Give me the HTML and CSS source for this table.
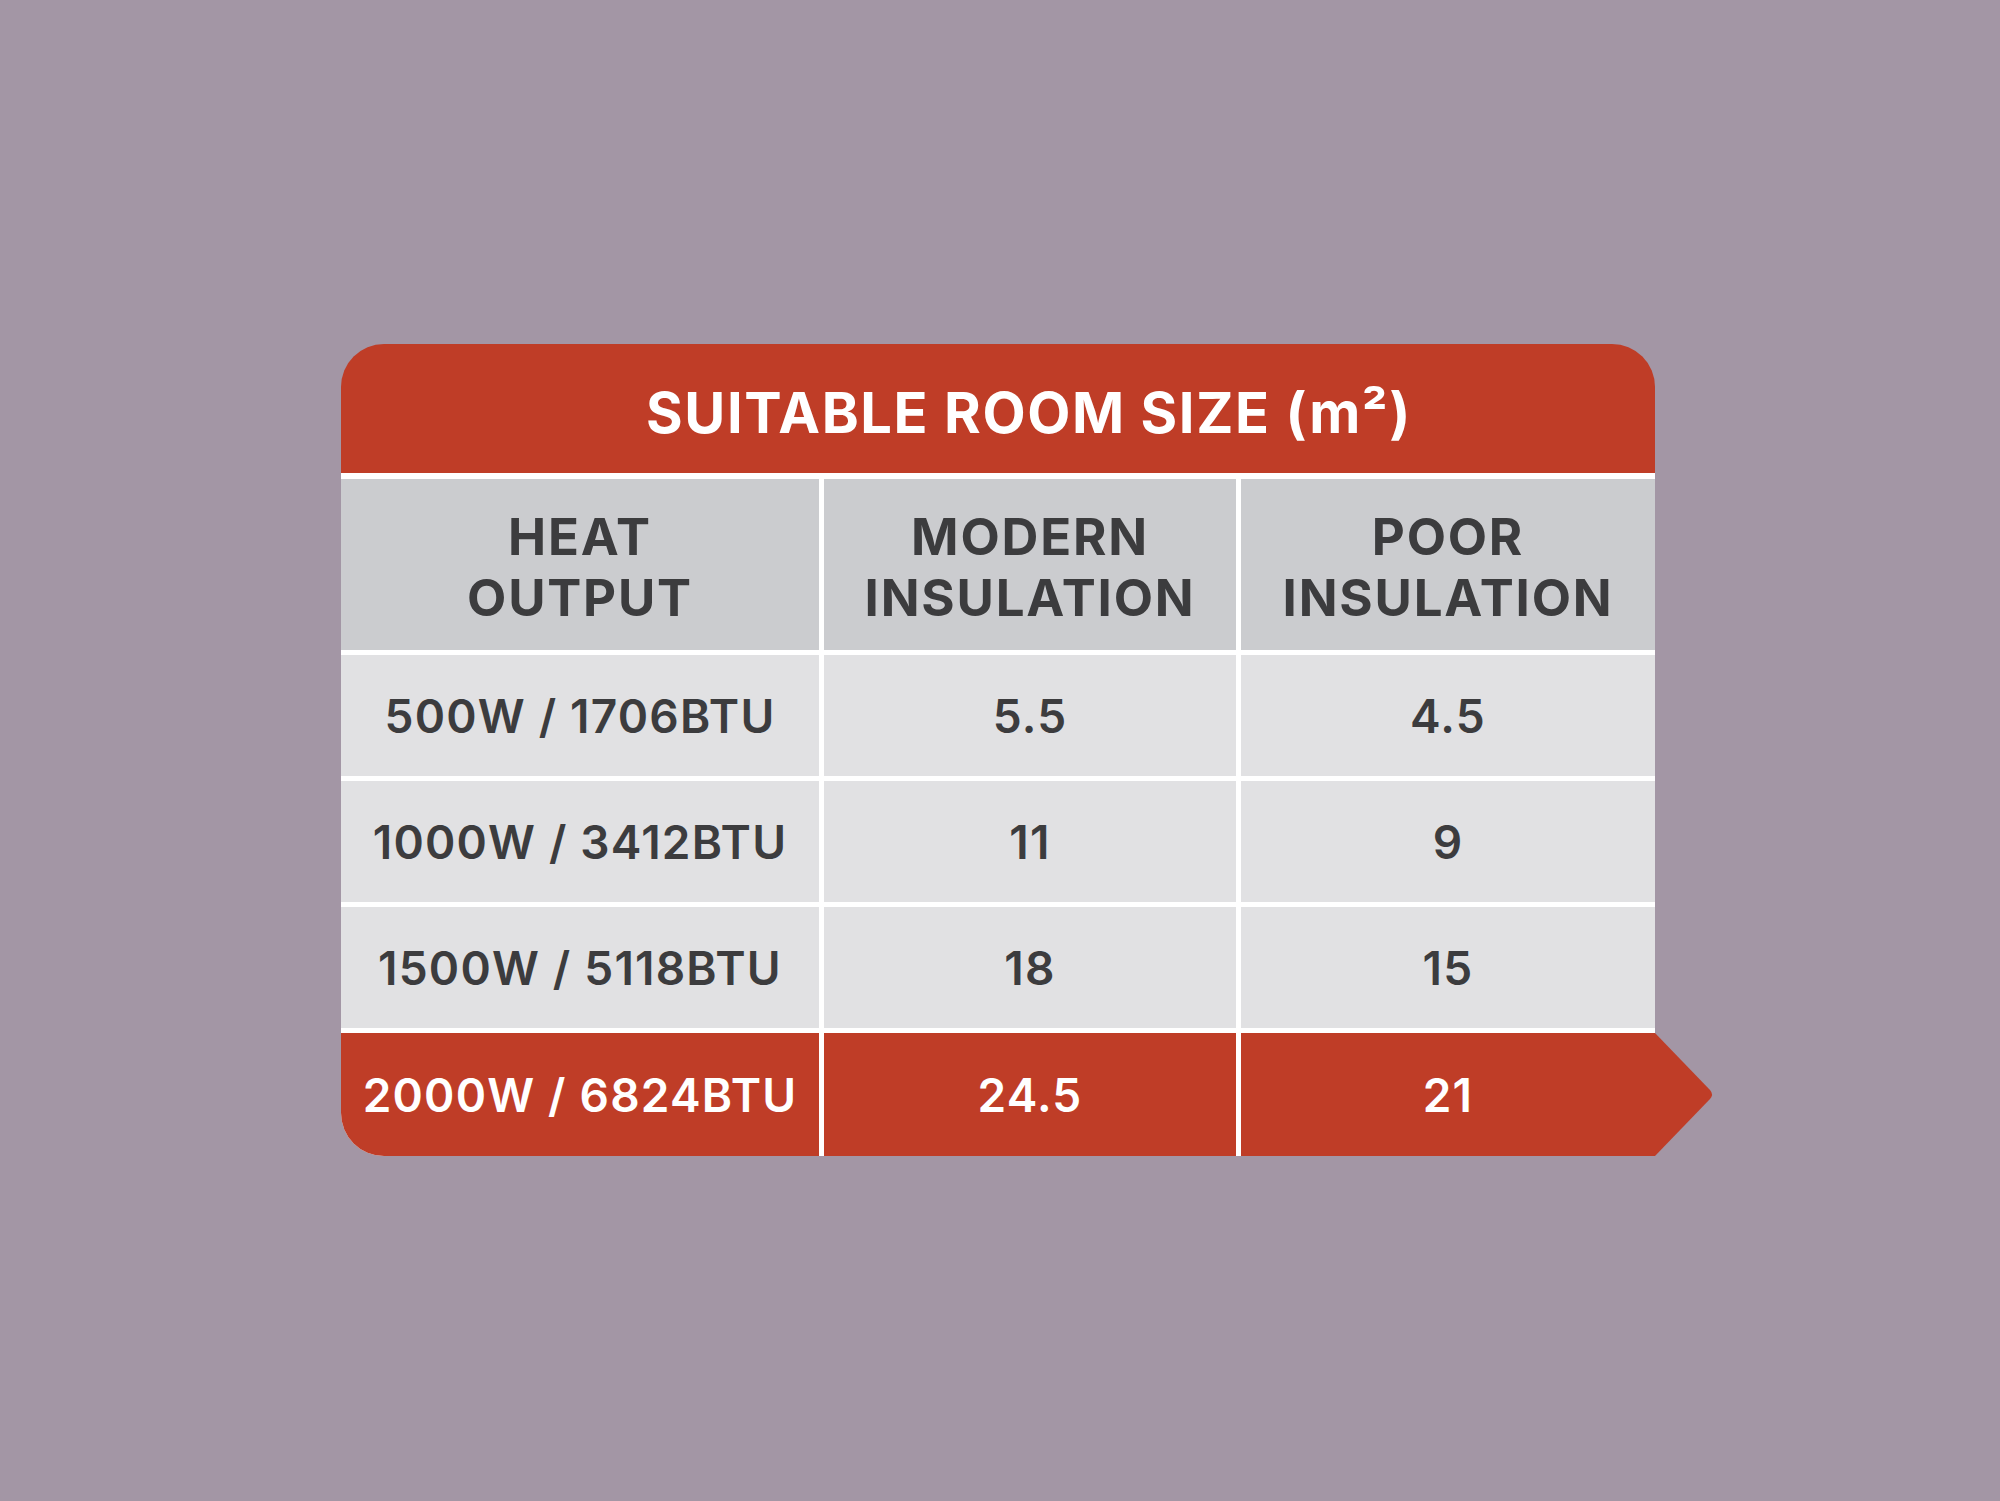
FILE: index.html
```html
<!DOCTYPE html>
<html lang="en">
<head>
<meta charset="utf-8">
<title>Suitable Room Size</title>
<link rel="stylesheet" href="styles.css">
</head>
<body>
<div class="chart">
  <div class="title">SUITABLE ROOM SIZE (m²)</div>
  <div class="grid">
    <div class="cell head">HEAT<br>OUTPUT</div>
    <div class="cell head">MODERN<br>INSULATION</div>
    <div class="cell head">POOR<br>INSULATION</div>

    <div class="cell">500W / 1706BTU</div>
    <div class="cell">5.5</div>
    <div class="cell">4.5</div>

    <div class="cell">1000W / 3412BTU</div>
    <div class="cell">11</div>
    <div class="cell">9</div>

    <div class="cell">1500W / 5118BTU</div>
    <div class="cell">18</div>
    <div class="cell">15</div>

    <div class="cell hot first">2000W / 6824BTU</div>
    <div class="cell hot">24.5</div>
    <div class="cell hot last">21</div>
  </div>
</div>
</body>
</html>
```
FILE: styles.css
```css
html, body {
  margin: 0;
  padding: 0;
}
body {
  width: 2000px;
  height: 1501px;
  background: #a396a5;
  font-family: Inter, "Open Sans", "Liberation Sans", sans-serif;
  overflow: hidden;
}
.chart {
  width: 1314px;
  margin: 344px 0 0 341px;
  display: flex;
  flex-direction: column;
}
.title {
  height: 135px;
  background: #bf3d27;
  border-radius: 43px 43px 0 0;
  color: #ffffff;
  font-weight: 700;
  font-size: 56px;
  letter-spacing: 1.6px;
  display: flex;
  align-items: center;
  justify-content: center;
  padding-left: 62px;
  padding-top: 9px;
  box-sizing: border-box;
  border-bottom: 6px solid #ffffff;
}
.grid {
  display: grid;
  grid-template-columns: 478px 412px 414px;
  grid-template-rows: 171px 121px 121px 121px 123px;
  gap: 5px;
  background: #ffffff;
  border-bottom-left-radius: 43px;
}
.cell {
  background: #e1e1e3;
  color: #3c3c3e;
  font-size: 46px;
  font-weight: 600;
  letter-spacing: 1.2px;
  display: flex;
  align-items: center;
  justify-content: center;
  text-align: center;
  position: relative;
}
.cell.head {
  background: #cbcccf;
  font-size: 51px;
  font-weight: 700;
  line-height: 61px;
  letter-spacing: 1.8px;
  padding-top: 4px;
}
.cell.hot {
  background: #bf3d27;
  color: #ffffff;
}
.cell.first {
  border-bottom-left-radius: 43px;
}
.cell.last::after {
  content: "";
  position: absolute;
  left: 100%;
  top: 0;
  width: 60px;
  height: 123px;
  background: #bf3d27;
  clip-path: path('M0 0 L55 57 Q59 61.5 55 66 L0 123 Z');
}
```
